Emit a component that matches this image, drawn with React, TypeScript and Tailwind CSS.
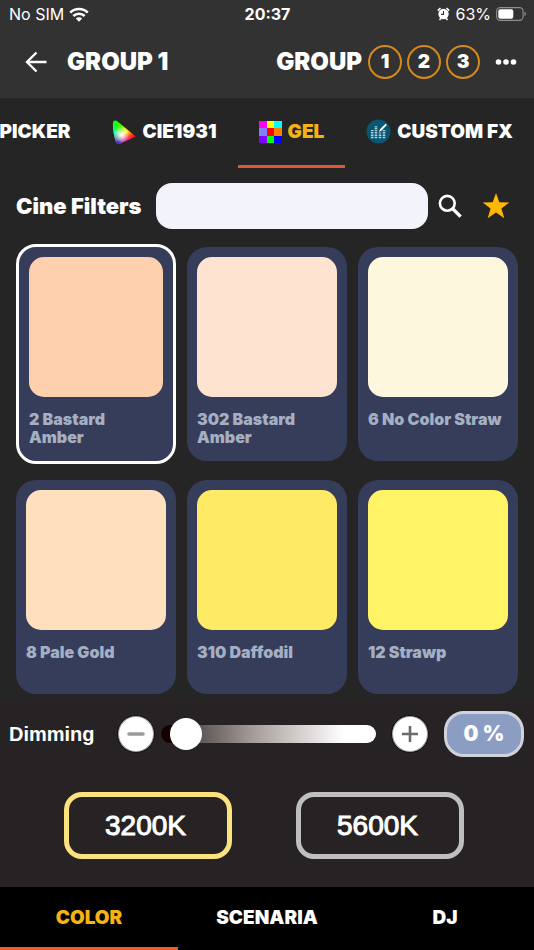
import { useState } from "react";

const filters = [
  { name: "2 Bastard Amber", color: "#ffd0ae" },
  { name: "302 Bastard Amber", color: "#ffe3d1" },
  { name: "6 No Color Straw", color: "#fdf8dd" },
  { name: "8 Pale Gold", color: "#ffdfbd" },
  { name: "310 Daffodil", color: "#ffea66" },
  { name: "12 Strawp", color: "#fff465" },
];

const gelColors = [
  "#ff00f0", "#ffff00", "#00ffff",
  "#8080ff", "#ff0000", "#ff8000",
  "#8000ff", "#00ff00", "#0000ff",
];

function StatusBar() {
  return (
    <div className="grid h-7 grid-cols-3 items-center pr-2 pl-[9px] text-base leading-5">
      <div className="flex items-center gap-[5px]">
        <span>No SIM</span>
        <svg width="20" height="15" viewBox="0 0 20 15" fill="none" stroke="white" strokeWidth="2.6">
          <path d="M1.2 5.6a12.6 12.6 0 0 1 17.6 0" />
          <path d="M4.3 9a8.2 8.2 0 0 1 11.4 0" />
          <path d="M10 14.8l-3.2-3.3a4.6 4.6 0 0 1 6.4 0z" fill="white" stroke="none" />
        </svg>
      </div>
      <span className="text-center font-bold">20:37</span>
      <div className="flex items-center justify-end gap-[5px]">
        <svg width="13" height="14" viewBox="0 0 13 14">
          <circle cx="6.5" cy="7" r="5.2" fill="white" />
          <path d="M.8 3.6L3.5 1M12.2 3.6L9.5 1M2.5 13l1.4-1.6M10.5 13l-1.4-1.6" stroke="white" strokeWidth="1.6" />
          <path d="M6.5 4v3.4H4" fill="none" stroke="#323232" strokeWidth="1.1" />
        </svg>
        <span>63%</span>
        <svg width="30" height="14" viewBox="0 0 30 14">
          <rect x=".6" y=".6" width="26.5" height="12.8" rx="3.6" fill="none" stroke="#8f8f8f" strokeWidth="1.1" />
          <rect x="2.3" y="2.3" width="15" height="9.4" rx="2" fill="white" />
          <path d="M28.5 4.8a2.4 2.4 0 0 1 0 4.4z" fill="#8f8f8f" />
        </svg>
      </div>
    </div>
  );
}

function CieIcon() {
  return (
    <svg width="24" height="24" viewBox="0 0 24 24">
      <defs>
        <linearGradient id="edge" x1="0" y1="0" x2="1" y2="0.6">
          <stop offset="0" stopColor="#00ff30" />
          <stop offset=".3" stopColor="#30ff00" />
          <stop offset=".65" stopColor="#fff000" />
          <stop offset="1" stopColor="#ff0000" />
        </linearGradient>
        <radialGradient id="cyan" cx="0" cy=".6" r=".42">
          <stop offset="0" stopColor="#00ffe0" />
          <stop offset="1" stopColor="#00ffe0" stopOpacity="0" />
        </radialGradient>
        <radialGradient id="blue" cx=".25" cy="1" r=".5">
          <stop offset="0" stopColor="#2000ff" />
          <stop offset="1" stopColor="#b000ff" stopOpacity="0" />
        </radialGradient>
        <radialGradient id="pink" cx=".65" cy=".85" r=".35">
          <stop offset="0" stopColor="#ff0090" />
          <stop offset="1" stopColor="#ff0060" stopOpacity="0" />
        </radialGradient>
        <radialGradient id="white" cx=".38" cy=".62" r=".36">
          <stop offset="0" stopColor="#ffffff" />
          <stop offset="1" stopColor="#ffffff" stopOpacity="0" />
        </radialGradient>
      </defs>
      {["edge", "cyan", "pink", "blue", "white"].map((id) => (
        <path key={id} d="M1 2.5C1.4.3 3.6-.2 5.6 1.4L23.8 16.5 8 23.4C5.5 24.2 4.3 23 3.4 20.2 1.6 14.5.5 7 1 2.5z" fill={`url(#${id})`} />
      ))}
    </svg>
  );
}

function GelIcon() {
  return (
    <svg width="23" height="22" viewBox="0 0 3 3" preserveAspectRatio="none" shapeRendering="crispEdges">
      {gelColors.map((c, i) => (
        <rect key={c} x={i % 3} y={Math.floor(i / 3)} width="1" height="1" fill={c} />
      ))}
    </svg>
  );
}

function FxIcon() {
  return (
    <svg width="25" height="25" viewBox="0 0 25 25">
      <circle cx="12.5" cy="12.5" r="12" fill="#075672" />
      <g stroke="#b7d0da" strokeWidth="2.6" strokeDasharray="1.5 .8">
        <path d="M6.2 19.2V11M10 19.2V7M14 19.2V13.5M18 19.2V11" />
      </g>
      <path d="M12.8 13l1.4-3L19.6 4.8l1.3 1.3L15.6 11.5z" fill="white" />
    </svg>
  );
}

const tabClass = "flex h-full shrink-0 items-center gap-[6px] border-b-3 px-[21px]";

export default function App() {
  const [selected, setSelected] = useState(0);
  const [dim, setDim] = useState(0);

  return (
    <div className="flex min-h-screen flex-col bg-[#252525] font-['Inter',sans-serif] text-white">
      <header className="bg-[#323232]">
        <StatusBar />
        <div className="flex h-[70px] items-center pr-4 pb-[2px] pl-6 text-[24px] leading-7 font-black">
          <button aria-label="Back" className="mr-[19px]">
            <svg width="24" height="24" viewBox="0 0 24 24" fill="none" stroke="white" strokeWidth="2.4">
              <path d="M22.5 12H3.5M12.5 2.5L3 12l9.5 9.5" />
            </svg>
          </button>
          <h1>GROUP 1</h1>
          <span className="ml-auto">GROUP</span>
          <div className="ml-[6px] flex gap-[5px]">
            {[1, 2, 3].map((n) => (
              <button key={n} className="size-[34px] rounded-full border-2 border-[#d58a1c] text-[19px] leading-6">
                {n}
              </button>
            ))}
          </div>
          <button aria-label="More" className="ml-[14px]">
            <svg width="24" height="24" viewBox="0 0 24 24" fill="white">
              <circle cx="4.5" cy="12" r="2.8" />
              <circle cx="12" cy="12" r="2.8" />
              <circle cx="19.5" cy="12" r="2.8" />
            </svg>
          </button>
        </div>
      </header>

      <nav className="flex h-[70px] justify-end overflow-hidden text-[19px] leading-6 font-black">
        <button className={`${tabClass} border-transparent`}>PICKER</button>
        <button className={`${tabClass} border-transparent`}><CieIcon />CIE1931</button>
        <button className={`${tabClass} border-[#de5833] text-[#f5b315]`}><GelIcon />GEL</button>
        <button className={`${tabClass} border-transparent`}><FxIcon />CUSTOM FX</button>
      </nav>

      <div className="mt-[15px] flex items-center px-4">
        <label htmlFor="filter" className="mr-[14px] text-[22px] leading-7 font-black">Cine Filters</label>
        <input id="filter" type="text" className="h-[46px] min-w-0 flex-1 rounded-[16px] bg-[#f3f4fb] px-4 text-base text-gray-900 outline-none" />
        <button aria-label="Search" className="ml-[10px]">
          <svg width="24" height="24" viewBox="0 0 24 24" fill="none" stroke="white">
            <circle cx="9.3" cy="9.3" r="7.4" strokeWidth="2.6" />
            <path d="M14.6 14.6l8 8" strokeWidth="3.4" />
          </svg>
        </button>
        <button aria-label="Favourites" className="mr-2 ml-5">
          <svg width="28" height="28" viewBox="0 0 28 28" fill="#ffb803">
            <path d="M14 1l3.3 9.3 10 .1-7.9 6.1 2.9 9.7L14 20.4l-8.3 5.8 2.9-9.7L.7 10.4l10-.1z" />
          </svg>
        </button>
      </div>

      <main className="mt-[18px] grid grid-cols-3 gap-x-[11px] gap-y-[19px] px-4">
        {filters.map((f, i) => (
          <button
            key={f.name}
            onClick={() => setSelected(i)}
            className={`flex flex-col rounded-[20px] bg-[#353d5b] p-[10px] text-left ${
              i === selected ? "-my-[3px] min-h-[220px] border-3 border-white" : "min-h-[214px]"
            }`}
          >
            <span className="h-[140px] w-full rounded-[15px]" style={{ backgroundColor: f.color }} />
            <span className="mt-[13px] pr-1 text-base leading-[18px] font-black text-[#a5afc2]">{f.name}</span>
          </button>
        ))}
      </main>

      <section className="mt-[5px] flex-1 bg-[#272324]">
        <div className="flex h-[70px] items-center pr-[10px] pl-[9px]">
          <label htmlFor="dim" className="font-['Liberation_Sans',sans-serif] text-[20px] leading-6 font-bold">Dimming</label>
          <button aria-label="Decrease" onClick={() => setDim(Math.max(0, dim - 1))} className="ml-[22px] rounded-full">
            <svg width="38" height="38" viewBox="0 0 38 38">
              <circle cx="19" cy="19" r="18.5" fill="#aaa5a6" stroke="#130d0e" />
              <circle cx="19" cy="19" r="17" fill="white" />
              <path d="M12 19h14" stroke="#9a9a9a" strokeWidth="3.6" strokeLinecap="round" />
            </svg>
          </button>
          <div className="ml-[6px] flex h-[18px] min-w-0 flex-1 items-center rounded-full bg-[linear-gradient(to_right,#160002_5%,#5c5654_18%,#aaa29f_45%,#ffffff_85%)] pl-[9px]">
            <input
              id="dim"
              type="range"
              min={0}
              max={100}
              value={dim}
              onChange={(e) => setDim(Number(e.target.value))}
              className="-my-[7px] h-8 w-full appearance-none bg-transparent [&::-webkit-slider-thumb]:size-8 [&::-webkit-slider-thumb]:appearance-none [&::-webkit-slider-thumb]:rounded-full [&::-webkit-slider-thumb]:bg-white"
            />
          </div>
          <button aria-label="Increase" onClick={() => setDim(Math.min(100, dim + 1))} className="ml-[15px] rounded-full">
            <svg width="38" height="38" viewBox="0 0 38 38">
              <circle cx="19" cy="19" r="18.5" fill="#aaa5a6" stroke="#130d0e" />
              <circle cx="19" cy="19" r="17" fill="white" />
              <path d="M11 19h16M19 11v16" stroke="#6a6a6a" strokeWidth="2.6" />
            </svg>
          </button>
          <output htmlFor="dim" className="ml-[15px] flex h-[46px] w-20 items-center justify-center rounded-[20px] border-3 border-[#cfd2dc] bg-[#8b9dc3] text-[21px] leading-6 font-black">
            {dim} %
          </output>
        </div>
        <div className="mt-[23px] mb-[27px] flex justify-center gap-16 pr-[6px] font-['Liberation_Sans',sans-serif] text-[28px] leading-8 [-webkit-text-stroke:1px_white]">
          <button className="h-[67px] w-[168px] rounded-[18px] border-5 border-[#fbe27c] pr-[5px]">3200K</button>
          <button className="h-[67px] w-[168px] rounded-[18px] border-5 border-[#bfbfbf] pr-[5px]">5600K</button>
        </div>
      </section>

      <footer className="grid h-16 grid-cols-3 border-t border-[#2b2526] bg-black text-[19px] leading-6 font-black">
        <button className="border-b-3 border-[#f05a30] pt-[2px] text-[#f5b315]">COLOR</button>
        <button className="border-b-3 border-transparent pt-[2px]">SCENARIA</button>
        <button className="border-b-3 border-transparent pt-[2px]">DJ</button>
      </footer>
    </div>
  );
}
